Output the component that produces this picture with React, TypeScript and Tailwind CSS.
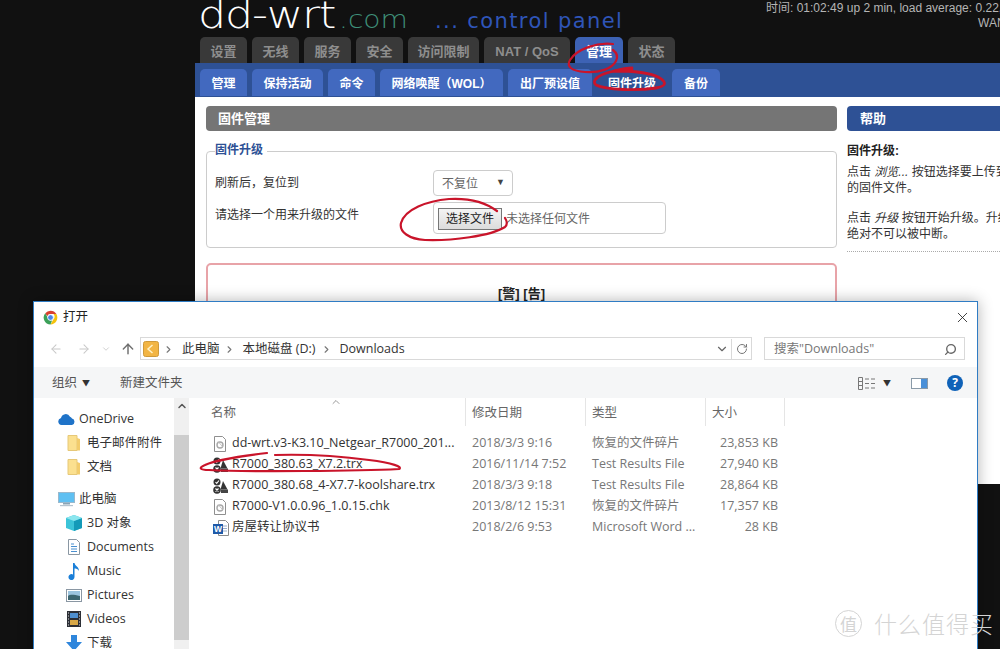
import { ArrowLeft, ArrowRight, ArrowUp, ChevronDown, ChevronRight, ChevronUp, RotateCw, Search, X } from 'lucide-react';

const topTabs = [
  { label: '设置', w: 'w-[47px]' },
  { label: '无线', w: 'w-[47px]' },
  { label: '服务', w: 'w-[47px]' },
  { label: '安全', w: 'w-[47px]' },
  { label: '访问限制', w: 'w-[71px]' },
  { label: 'NAT / QoS', w: 'w-[86px]' },
  { label: '管理', w: 'w-[48px]', active: true },
  { label: '状态', w: 'w-[47px]' },
];

const subTabs = [
  { label: '管理', w: 'w-[47px]' },
  { label: '保持活动', w: 'w-[71px]' },
  { label: '命令', w: 'w-[47px]' },
  { label: '网络唤醒（WOL）', w: 'w-[123px]' },
  { label: '出厂预设值', w: 'w-[84px]' },
  { label: '固件升级', w: 'w-[70px]', active: true },
  { label: '备份', w: 'w-[48px]' },
];

const files = [
  { icon: 'clip', name: 'dd-wrt.v3-K3.10_Netgear_R7000_201...', date: '2018/3/3 9:16', type: '恢复的文件碎片', size: '23,853 KB' },
  { icon: 'test', name: 'R7000_380.63_X7.2.trx', date: '2016/11/14 7:52', type: 'Test Results File', size: '27,940 KB' },
  { icon: 'test', name: 'R7000_380.68_4-X7.7-koolshare.trx', date: '2018/3/3 9:18', type: 'Test Results File', size: '28,864 KB' },
  { icon: 'clip', name: 'R7000-V1.0.0.96_1.0.15.chk', date: '2013/8/12 15:31', type: '恢复的文件碎片', size: '17,357 KB' },
  { icon: 'word', name: '房屋转让协议书', date: '2018/2/6 9:53', type: 'Microsoft Word ...', size: '28 KB' },
];

function ChromeIcon() {
  return (
    <svg width="15" height="15" viewBox="0 0 24 24">
      <path d="M12 1a11 11 0 0 1 9.5 5.5H12a5.5 5.5 0 0 0-5.2 3.6L3.6 5A11 11 0 0 1 12 1z" fill="#d9402f" />
      <path d="M21.5 6.5A11 11 0 0 1 12 23l4.7-8.2a5.5 5.5 0 0 0 0-8.3z" fill="#f4c20d" />
      <path d="M12 23A11 11 0 0 1 3.6 5l4.8 8.6a5.5 5.5 0 0 0 6.3 2.9z" fill="#3ba058" />
      <circle cx="12" cy="12" r="4.6" fill="#4a86e8" stroke="#fff" strokeWidth="1.4" />
    </svg>
  );
}

function FolderIcon() {
  return (
    <svg width="14" height="16" viewBox="0 0 14 16">
      <path d="M1 .5h9v15H1z" fill="#fbe08f" stroke="#e6c878" />
      <path d="M10 3l3 1v11.500h-3z" fill="#f2cc6c" />
    </svg>
  );
}

function PcIcon() {
  return (
    <svg width="17" height="15" viewBox="0 0 17 15">
      <rect x="0.500" y="0.500" width="16" height="10" fill="#5fc0f2" stroke="#9ab8cc" />
      <rect x="5" y="11" width="7" height="1.500" fill="#8aa4b6" />
      <rect x="2" y="13" width="13" height="1.200" fill="#b6c4cf" />
    </svg>
  );
}

function NavIcon({ kind }: { kind: string }) {
  if (kind === 'cube') {
    return (
      <svg width="16" height="16" viewBox="0 0 16 16">
        <path d="M8 0l8 3v10l-8 3-8-3V3z" fill="#3cc4d8" />
        <path d="M8 6l8-3v10l-8 3z" fill="#149ab8" />
        <path d="M8 0l8 3-8 3-8-3z" fill="#8ce6ee" />
      </svg>
    );
  }
  if (kind === 'doc') {
    return (
      <svg width="14" height="16" viewBox="0 0 14 16">
        <path d="M1.500.5h8l3 3v12h-11z" fill="#fff" stroke="#8a97a3" />
        <path d="M4 5h3M4 7.500h6M4 10h6M4 12.500h6" stroke="#4a90d0" />
      </svg>
    );
  }
  if (kind === 'music') {
    return (
      <svg width="14" height="17" viewBox="0 0 14 17">
        <path d="M6 0h1.500c.5 3 4.500 3.500 4.500 8-1-2-3-2.500-4.500-2.500V14a3 3 0 1 1-1.500-2.500z" fill="#1a7fd8" />
      </svg>
    );
  }
  if (kind === 'picture') {
    return (
      <svg width="16" height="13" viewBox="0 0 16 13">
        <rect x="0.500" y="0.500" width="15" height="12" fill="#fff" stroke="#8a97a3" />
        <rect x="2" y="2" width="12" height="5" fill="#9cc4de" />
        <path d="M2 7c3-2 6-1 12 0v4H2z" fill="#3d6670" />
      </svg>
    );
  }
  if (kind === 'video') {
    return (
      <svg width="14" height="16" viewBox="0 0 14 16">
        <rect width="14" height="16" fill="#2c2f36" />
        <rect x="3" y="2" width="8" height="5" fill="#4e8fd0" />
        <rect x="3" y="9" width="8" height="5" fill="#d8a848" />
        <path d="M1 2h1M1 5h1M1 8h1M1 11h1M1 14h1M12 2h1M12 5h1M12 8h1M12 11h1M12 14h1" stroke="#ddd" />
      </svg>
    );
  }
  return (
    <svg width="16" height="16" viewBox="0 0 16 16">
      <path d="M5 0h6v7h5l-8 9-8-9h5z" fill="#2f86dc" />
    </svg>
  );
}

function FileIcon({ kind }: { kind: string }) {
  if (kind === 'clip') {
    return (
      <svg width="14" height="16" viewBox="0 0 14 16">
        <path d="M1.500.5h8l3 3v12h-11z" fill="#fff" stroke="#8f8f8f" />
        <circle cx="7" cy="9" r="3" fill="none" stroke="#a8a8a8" strokeWidth="1.400" />
        <path d="M5 5.500l4.500 5" stroke="#c4c4c4" />
      </svg>
    );
  }
  if (kind === 'test') {
    return (
      <svg width="15" height="16" viewBox="0 0 15 16">
        <circle cx="4" cy="4" r="3.500" fill="#333" />
        <path d="M2.500 4l1.200 1.300L6 2.500" fill="none" stroke="#fff" strokeWidth="1.100" />
        <circle cx="4" cy="12" r="3.800" fill="#333" />
        <path d="M2.500 10.500l3 3M5.500 10.500l-3 3" stroke="#fff" strokeWidth="1.200" />
        <path d="M10 3l4.500 8.500H7.500z" fill="#333" />
        <rect x="8" y="11.500" width="7" height="3.500" fill="#444" />
      </svg>
    );
  }
  return (
    <svg width="16" height="16" viewBox="0 0 16 16">
      <path d="M5.500.5h7l3 3v12h-10z" fill="#fff" stroke="#8a8a8a" />
      <path d="M10 6h4M10 8.500h4M10 11h4" stroke="#9ab0cc" />
      <rect y="4" width="10" height="10" fill="#1f5aa8" />
      <text x="5" y="12" textAnchor="middle" fontSize="8.500" fontWeight="700" fill="#fff" fontFamily="Liberation Sans, sans-serif">W</text>
    </svg>
  );
}

function SidebarRow({ icon, indent }: { icon: React.ReactNode; indent: string }) {
  return <div className={`flex h-[24px] items-center ${indent}`}>{icon}</div>;
}

function RouterPage() {
  return (
    <div className="ml-[195px] flex h-[484px] flex-col overflow-hidden">
      <header className="relative h-[63px] shrink-0">
        <div className="flex h-[37px] items-start">
          <div className="ml-[3px] -mt-[1px] flex h-[34px] items-baseline whitespace-nowrap leading-[34px] [font-family:'DejaVu_Sans',sans-serif]">
            <span className="inline-block w-[141px] origin-left scale-x-[1.2] text-[37px] font-extralight tracking-[-1px] text-white">dd-wrt</span>
            <span className="inline-block w-[96px] origin-left scale-x-[1.17] text-[24px] font-extralight text-[#3f9079]">.com</span>
            <span className="text-[21px] tracking-[1.4px] text-[#2f55b8]">... control panel</span>
          </div>
          <div className="ml-auto mt-[1px] w-[234px] shrink-0 overflow-hidden text-[12px] leading-[15px] text-[#b5b5b5]">
            <p className="whitespace-nowrap">时间: 01:02:49 up 2 min, load average: 0.22, 0.09</p>
            <p className="whitespace-nowrap pl-[212px] font-normal">WAN</p>
          </div>
        </div>
        <nav className="flex h-[26px] gap-[5px] pl-[5px]">
          {topTabs.map((tab) => (
            <div
              key={tab.label}
              className={`flex items-center justify-center rounded-t-[5px] pt-[3px] text-[13px] font-bold ${tab.w} ${
                tab.active ? 'bg-[#3d62b4] text-white' : 'bg-[#393939] text-[#8e8e8e]'
              }`}
            >
              {tab.label}
            </div>
          ))}
        </nav>
      </header>

      <nav className="flex h-[34px] shrink-0 items-end gap-[5px] bg-[#2e5195] pb-[1px] pl-[5px]">
        {subTabs.map((tab) => (
          <div
            key={tab.label}
            className={`flex h-[27px] items-center justify-center rounded-t-[5px] pt-[3px] text-[12px] font-bold text-white ${tab.w} ${
              tab.active ? 'bg-[#2e5195]' : 'bg-[#4269bf]'
            }`}
          >
            {tab.label}
          </div>
        ))}
      </nav>

      <main className="flex flex-1 gap-[10px] bg-white pl-[11px] pt-[9px]">
        <section className="w-[631px] shrink-0">
          <h2 className="flex h-[25px] items-center rounded-[4px] bg-[#757575] pl-[12px] text-[13px] font-bold text-white">固件管理</h2>
          <fieldset className="mt-[20px] h-[97px] rounded-[4px] border border-[#cccccc] pl-[8px]">
            <div className="absolute -mt-[10px] bg-white pr-[4px] text-[12px] font-bold leading-[16px] text-[#2e5195]">固件升级</div>
            <div className="flex h-[50px] items-start pt-[18px]">
              <span className="w-[218px] text-[12px] leading-[26px] text-[#333]">刷新后，复位到</span>
              <div className="flex h-[26px] w-[80px] items-center justify-between rounded-[4px] border border-[#cccccc] pl-[8px] pr-[7px] text-[12px] text-[#666]">
                <span className="pt-[2px]">不复位</span>
                <span className="text-[9px] text-[#444]">▼</span>
              </div>
            </div>
            <div className="flex items-start">
              <span className="w-[218px] text-[12px] leading-[26px] text-[#333]">请选择一个用来升级的文件</span>
              <div className="flex h-[32px] w-[233px] items-center rounded-[4px] border border-[#cccccc] pl-[4px] pt-px text-[12px] text-[#666]">
                <div className="flex h-[22px] w-[64px] items-center justify-center border border-[#777] bg-gradient-to-b from-[#f4f4f4] to-[#dcdcdc] text-[#222]">选择文件</div>
                <span className="ml-[4px]">未选择任何文件</span>
              </div>
            </div>
          </fieldset>
          <div className="mt-[15px] h-[150px] rounded-[5px] border-2 border-[#e8a3a8] pt-[19px] text-center text-[13px] font-bold text-[#222]">
            [警] [告]
          </div>
        </section>

        <aside className="min-w-0 flex-1 overflow-hidden">
          <h2 className="flex h-[25px] items-center rounded-l-[4px] bg-[#2e5195] pl-[13px] text-[13px] font-bold text-white">帮助</h2>
          <div className="whitespace-nowrap border-b border-dotted border-[#aaa] pb-[9px] pt-[12px] text-[12px] leading-[16px] text-[#333]">
            <p className="mb-[5px] font-bold leading-[16px] text-[#222]">固件升级:</p>
            <p>点击 <em>浏览...</em> 按钮选择要上传到路由器</p>
            <p>的固件文件。</p>
            <p className="mt-[14px]">点击 <em>升级</em> 按钮开始升级。升级过程</p>
            <p>绝对不可以被中断。</p>
          </div>
        </aside>
      </main>
    </div>
  );
}

function FileDialog() {
  return (
    <div className="absolute left-[33px] top-[301px] h-[360px] w-[945px] border border-[#2f7cc4] bg-white text-[12.500px] text-[#444] shadow-[0_0_14px_rgba(0,0,0,0.3)] [font-family:'Open_Sans','Noto_Sans_CJK_SC',sans-serif]">
      <div className="flex h-[35px] items-center pb-[5px] pl-[9px] pr-[6px]">
        <ChromeIcon />
        <span className="ml-[5px] text-[12.500px] text-[#222]">打开</span>
        <X className="ml-auto size-[17px] text-[#222]" strokeWidth={1.200} />
      </div>

      <div className="flex h-[30px] items-start">
        <div className="flex h-[23px] w-[106px] shrink-0 items-center pl-[15px] text-[#c8c8c8]">
          <ArrowLeft className="size-[14px]" strokeWidth={1.800} />
          <ArrowRight className="ml-[14px] size-[14px]" strokeWidth={1.800} />
          <ChevronDown className="ml-[10px] size-[10px]" />
          <ArrowUp className="ml-[9px] size-[16px] text-[#707070]" strokeWidth={2.200} />
        </div>
        <div className="flex h-[23px] w-[612px] items-center border border-[#d9d9d9] pl-[2px] pt-px text-[#333]">
          <svg width="16" height="16" viewBox="0 0 16 16" className="shrink-0">
            <rect x="0.500" y="0.500" width="15" height="15" rx="2" fill="#f2b544" stroke="#cf9a3a" />
            <path d="M9.500 4L5 8l4.500 4" fill="none" stroke="#fff3c8" strokeWidth="1.500" />
          </svg>
          <ChevronRight className="ml-[4px] size-[11px] text-[#777]" strokeWidth={2.500} />
          <span className="ml-[8px]">此电脑</span>
          <ChevronRight className="ml-[4px] size-[11px] text-[#777]" strokeWidth={2.500} />
          <span className="ml-[8px]">本地磁盘 (D:)</span>
          <ChevronRight className="ml-[5px] size-[11px] text-[#777]" strokeWidth={2.500} />
          <span className="ml-[8px]">Downloads</span>
          <ChevronDown className="ml-auto mr-[2px] size-[14px] text-[#666]" />
          <div className="flex h-full w-[20px] items-center justify-center border-l border-[#d9d9d9]">
            <RotateCw className="size-[12px] text-[#777]" />
          </div>
        </div>
        <div className="ml-[12px] flex h-[23px] w-[201px] items-center justify-between border border-[#d9d9d9] pl-[9px] pr-[7px] pt-px text-[#777]">
          <span>搜索"Downloads"</span>
          <Search className="size-[13px] -scale-x-100 text-[#666]" strokeWidth={2.500} />
        </div>
      </div>

      <div className="flex h-[31px] items-center bg-[#f5f6f7] pl-[18px] pr-[14px] pt-px text-[#555]">
        <span>组织</span>
        <span className="ml-[5px] text-[8px] text-[#333]">▼</span>
        <span className="ml-[30px]">新建文件夹</span>
        <svg width="17" height="13" viewBox="0 0 17 13" className="ml-auto">
          <path d="M.5.5h4v12h-4zM.5 4.500h4M.5 8.500h4M7 2h4M7 6.500h4M7 11h4M13 2h4M13 6.500h4M13 11h4" fill="none" stroke="#777" />
        </svg>
        <span className="ml-[8px] text-[8px] text-[#333]">▼</span>
        <svg width="17" height="11" viewBox="0 0 17 11" className="ml-[20px]">
          <rect x="0.500" y="0.500" width="16" height="10" fill="#fff" stroke="#8a9aa8" />
          <rect x="10" y="1" width="6" height="9" fill="#4a90d8" />
        </svg>
        <span className="ml-[19px] flex size-[16px] items-center justify-center rounded-full bg-[#0f62b8] text-[12px] font-bold text-white">?</span>
      </div>

      <div className="flex">
        <div className="flex w-[156px] shrink-0">
          <div className="w-[140px] shrink-0 pt-[9px] text-[#333]">
            <SidebarRow
              indent="pl-[24px]"
              icon={
                <>
                  <svg width="17" height="11" viewBox="0 0 17 11">
                    <path d="M3.500 11a3.500 3.500 0 0 1-.5-6.900 4.800 4.800 0 0 1 9-1.400 3.600 3.600 0 0 1 2 1.900A3.300 3.300 0 0 1 14 11z" fill="#1f73c8" />
                  </svg>
                  <span className="ml-[4px]">OneDrive</span>
                </>
              }
            />
            <SidebarRow indent="pl-[33px]" icon={<><FolderIcon /><span className="ml-[6px]">电子邮件附件</span></>} />
            <SidebarRow indent="pl-[33px]" icon={<><FolderIcon /><span className="ml-[6px]">文档</span></>} />
            <div className="h-[8px]" />
            <SidebarRow indent="pl-[24px]" icon={<><PcIcon /><span className="ml-[4px]">此电脑</span></>} />
            {[
              { kind: 'cube', label: '3D 对象' },
              { kind: 'doc', label: 'Documents' },
              { kind: 'music', label: 'Music' },
              { kind: 'picture', label: 'Pictures' },
              { kind: 'video', label: 'Videos' },
              { kind: 'down', label: '下载' },
            ].map((item) => (
              <SidebarRow
                key={item.label}
                indent="pl-[32px]"
                icon={
                  <>
                    <span className="flex w-[16px] justify-center">
                      <NavIcon kind={item.kind} />
                    </span>
                    <span className="ml-[5px]">{item.label}</span>
                  </>
                }
              />
            ))}
          </div>
          <div className="h-[251px] w-[15px] shrink-0 bg-[#f0f0f0]">
            <div className="flex h-[37px] justify-center pt-[2px]">
              <ChevronUp className="size-[12px] text-[#555]" strokeWidth={3} />
            </div>
            <div className="h-[205px] bg-[#cdcdcd]" />
          </div>
        </div>

        <div className="relative flex-1">
          <ChevronUp className="absolute left-[140px] -top-[2px] size-[12px] text-[#777]" strokeWidth={1.500} />
          <div className="grid h-[28px] grid-cols-[275px_120px_120px_80px] text-[#666]">
            <div className="flex items-center pl-[21px] pt-[2px]">名称</div>
            <div className="flex items-center border-l border-[#e5e5e5] pl-[6px] pt-[2px]">修改日期</div>
            <div className="flex items-center border-l border-[#e5e5e5] pl-[6px] pt-[2px]">类型</div>
            <div className="flex items-center border-x border-[#e5e5e5] pl-[6px] pt-[2px]">大小</div>
          </div>
          <div className="pt-[7px]">
            {files.map((file) => (
              <div key={file.name} className="grid h-[21px] grid-cols-[275px_120px_120px_80px] items-center whitespace-nowrap text-[#777]">
                <div className="flex items-center pl-[23px] text-[#333]">
                  <span className="flex w-[19px] shrink-0">
                    <FileIcon kind={file.icon} />
                  </span>
                  {file.name}
                </div>
                <div className="pl-[7px]">{file.date}</div>
                <div className="pl-[7px]">{file.type}</div>
                <div className="pr-[7px] text-right">{file.size}</div>
              </div>
            ))}
          </div>
        </div>
      </div>
    </div>
  );
}

function RedMarks() {
  return (
    <svg width="1000" height="649" viewBox="0 0 1000 649" fill="none" stroke="#c9142a" strokeWidth="2.200" strokeLinecap="round" className="pointer-events-none absolute left-0 top-0">
      <path d="M613 44c-16-2-36 5-43 16-4 7 2 11 15 12 14 1 27-3 31-11 2-4 1-8-3-11" />
      <path d="M632 68c-6 0-14 2-18 3 12 0 34 1 44 6 9 5 9 9-2 11-18 3-50 2-60-3-5-4 2-10 14-13 8-2 16-2 22-2" strokeWidth="2.800" />
      <path d="M497 211c-12-9-30-13-48-12-22 2-44 10-48 24-2 9 8 16 24 17 26 1 66-4 80-13 3-3 2-6 0-9" />
      <path d="M267 453c-26 3-54 8-62 12-7 3-5 5 4 5 40 2 150 1 190-1 4-2-6-6-30-9-30-4-60-6-94-5" />
    </svg>
  );
}

export default function App() {
  return (
    <div className="relative h-[649px] w-[1000px] overflow-hidden bg-[#111111] text-[12px] [font-family:'Liberation_Sans','Noto_Sans_CJK_SC',sans-serif]">
      <RouterPage />
      <FileDialog />
      <RedMarks />
      <div className="pointer-events-none absolute left-[835px] top-[610px] flex items-center text-[#d4d4d4] [font-family:'Noto_Sans_CJK_SC',sans-serif]">
        <span className="flex size-[27px] items-center justify-center rounded-full border border-[#d4d4d4] text-[17px] leading-none">值</span>
        <span className="ml-[12px] text-[23px] font-light leading-[27px] tracking-[1px]">什么值得买</span>
      </div>
    </div>
  );
}
